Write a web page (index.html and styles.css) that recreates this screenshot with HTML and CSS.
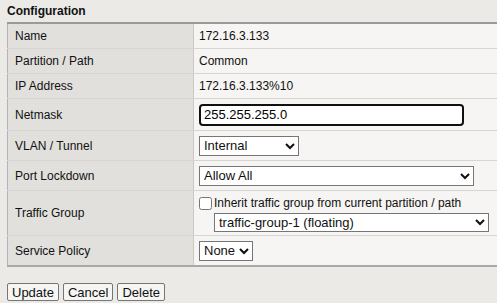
FILE: index.html
```html
<!DOCTYPE html>
<html lang="en">
<head>
  <meta charset="UTF-8">
  <title>Configuration</title>
  <link rel="stylesheet" href="styles.css">
</head>
<body>
  <div class="section-title">Configuration</div>
  <table class="props">
    <tr>
      <td class="label">Name</td>
      <td class="value">172.16.3.133</td>
    </tr>
    <tr>
      <td class="label">Partition / Path</td>
      <td class="value">Common</td>
    </tr>
    <tr>
      <td class="label">IP Address</td>
      <td class="value">172.16.3.133%10</td>
    </tr>
    <tr class="tall">
      <td class="label">Netmask</td>
      <td class="value"><input type="text" class="netmask" value="255.255.255.0"></td>
    </tr>
    <tr class="mid">
      <td class="label">VLAN / Tunnel</td>
      <td class="value">
        <select class="vlan"><option>Internal</option></select>
      </td>
    </tr>
    <tr class="mid">
      <td class="label">Port Lockdown</td>
      <td class="value">
        <select class="lockdown"><option>Allow All</option></select>
      </td>
    </tr>
    <tr>
      <td class="label">Traffic Group</td>
      <td class="value">
        <label class="inherit"><input type="checkbox"> Inherit traffic group from current partition / path</label>
        <div class="indent">
          <select class="group"><option>traffic-group-1 (floating)</option></select>
        </div>
      </td>
    </tr>
    <tr class="mid">
      <td class="label">Service Policy</td>
      <td class="value">
        <select class="policy"><option>None</option></select>
      </td>
    </tr>
  </table>

  <div class="actions">
    <button>Update</button>
    <button>Cancel</button>
    <button>Delete</button>
  </div>
</body>
</html>
```

FILE: styles.css
```css
body {
  margin: 0;
  padding: 0 0 0 7px;
  background: #ebeae6;
  font-family: "Liberation Sans", Arial, sans-serif;
  font-size: 12px;
  color: #111;
  overflow: hidden;
}
.section-title {
  font-weight: bold;
  padding: 4px 0 0 0;
  height: 18px;
  line-height: 14px;
}
.props {
  border-collapse: collapse;
  width: 490px;
  border-top: 2px solid #9a9a9a;
  border-bottom: 2px solid #a8a8a8;
  border-left: 1px solid #b4b4b4;
}
.props td {
  border-bottom: 1px solid #d6d5d2;
  height: 24px;
  padding: 0;
  vertical-align: middle;
}
.props tr:last-child td {
  border-bottom: none;
}
.props tr.tall td {
  height: 31px;
}
.props tr.mid td {
  height: 29px;
}
.label {
  width: 178px;
  padding-left: 7px !important;
  background: #e1e0dd;
  border-right: 1px solid #c9c8c5;
}
.value {
  background: #f6f5f3;
  padding-left: 5px !important;
}
.netmask {
  width: 255px;
  height: 16px;
  margin: 0;
  padding: 1px 3px;
  border: 2px solid #111;
  border-radius: 4px;
  font-family: inherit;
  font-size: 13px;
  background: #fff;
  outline: none;
}
select {
  font-family: inherit;
  font-size: 13px;
  height: 20px;
  margin: 0;
  border: 1px solid #767676;
  border-radius: 0;
  background: #fff;
  color: #111;
}
.vlan {
  width: 100px;
}
.lockdown {
  width: 275px;
}
.group {
  width: 275px;
  height: 19px;
}
.policy {
  width: 54px;
  padding: 0;
}
.inherit {
  display: flex;
  align-items: center;
  height: 18px;
  margin-top: 3px;
}
.inherit input {
  margin: 0 2px 0 0;
  width: 13px;
  height: 13px;
}
.indent {
  padding: 1px 0 3px 15px;
}
.actions {
  margin-top: 16px;
  display: flex;
  gap: 4px;
}
.actions button {
  font-family: inherit;
  font-size: 13px;
  height: 18px;
  padding: 0 4px;
  background: #f5f5f4;
  border: 1px solid #767676;
  border-radius: 2px;
  color: #111;
}
```
